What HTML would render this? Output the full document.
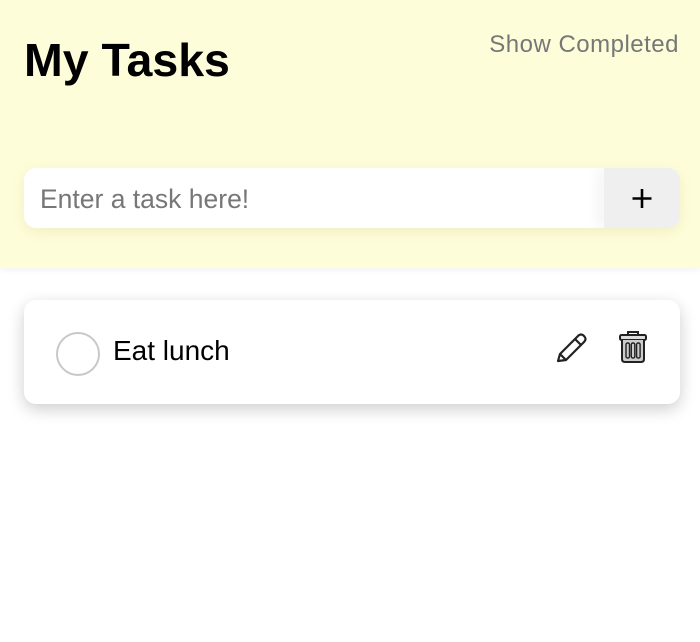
<!DOCTYPE html>
<html><head><style>
body{margin:0;width:700px;height:642px;background:#fff;font-family:"Liberation Sans",sans-serif;position:relative;overflow:hidden}
.hdr{position:absolute;left:0;top:0;width:700px;height:268px;background:#fefdda;box-shadow:0 2px 6px rgba(0,0,0,0.06)}
h1{position:absolute;left:24px;top:33px;margin:0;font-size:46.5px;font-weight:bold;color:#000}
.sc{position:absolute;right:21px;top:31px;font-size:24px;color:#777;letter-spacing:0.5px}
.inp{position:absolute;left:24px;top:168px;width:656px;height:60px;background:#fff;border-radius:12px;box-shadow:0 4px 12px rgba(200,200,120,0.25);overflow:hidden}
.inp span{position:absolute;left:16px;top:16px;font-size:26.5px;color:#777}
.btn{position:absolute;right:0;top:0;width:76px;height:60px;background:#efefef;box-shadow:-8px 0 12px rgba(0,0,0,0.04)}
.card{position:absolute;left:24px;top:300px;width:656px;height:104px;background:#fff;border-radius:12px;box-shadow:0 5px 16px rgba(0,0,0,0.2)}
.circ{position:absolute;left:32px;top:32px;width:40px;height:40px;border:2px solid #c8c8c8;border-radius:50%}
.t{position:absolute;left:89px;top:35px;font-size:28px;color:#000}
</style></head><body>
<div class="hdr">
<h1>My Tasks</h1>
<div class="sc">Show Completed</div>
<div class="inp"><span>Enter a task here!</span>
<div class="btn"><svg width="76" height="60"><path d="M38 21V40M28.5 30.5H47.5" stroke="#000" stroke-width="2.6"/></svg></div></div>
</div>
<div class="card">
<div class="circ"></div>
<div class="t">Eat lunch</div>
<svg style="position:absolute;left:530px;top:30px" width="36" height="36" viewBox="0 0 36 36" fill="none" stroke="#222" stroke-width="2.2" stroke-linejoin="round">
<path d="M4 31L6 24L24 6Q27 3 30 6Q33 9 30 12L12 30Z"/><path d="M21 9L27 15M6 24L12 30"/></svg>
<svg style="position:absolute;left:593px;top:30px" width="32" height="34" viewBox="0 0 32 34" fill="none" stroke="#222" stroke-width="2">
<path d="M11 5V2H21V5"/><rect x="3" y="5" width="26" height="5" rx="1.5" fill="#ddd"/><path d="M5 10V29Q5 32 8 32H24Q27 32 27 29V10" fill="#ccc"/>
<rect x="9" y="13" width="3.5" height="15" rx="1.5" stroke-width="1.4"/><rect x="14.3" y="13" width="3.5" height="15" rx="1.5" stroke-width="1.4"/><rect x="19.6" y="13" width="3.5" height="15" rx="1.5" stroke-width="1.4"/></svg>
</div>
</body></html>
